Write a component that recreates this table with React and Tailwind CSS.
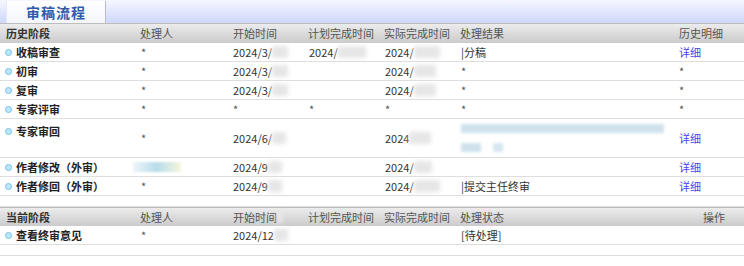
import React from "react";

const F = { fontFamily: '"Noto Sans CJK SC", "Noto Sans", sans-serif' };
const cols = "grid grid-cols-[140px_92px_76px_76px_76px_218px_1fr]";

function Bullet() {
  return (
    <span className="inline-block w-[7px] h-[7px] rounded-full bg-[#bfe6fb] border border-[#6cc4f0] mr-[4px] shrink-0" />
  );
}

function Blur({ w = 18, c = "bg-[#e6e6e6]" }) {
  return <span className={`inline-block h-[12px] ${c} blur-[2px] align-middle`} style={{ width: w }} />;
}

function Date({ text, blur = 18 }) {
  return (
    <span className="flex items-center">
      <span>{text}</span>
      {blur ? <Blur w={blur} /> : null}
    </span>
  );
}

function Row({ name, h = "h-[19px]", cells, top = false }) {
  return (
    <div className={`${cols} ${h} border-b border-[#dedede] text-[11px] text-[#333] items-center`}>
      <div className={`flex items-center pl-[5px] font-bold text-[#222] ${top ? "self-start pt-[4px]" : ""}`}>
        <Bullet />
        {name}
      </div>
      {cells.map((c, i) => (
        <div key={i} className="pl-[1px] flex items-center">{c}</div>
      ))}
    </div>
  );
}

const star = <span className="text-[#555]">*</span>;
const link = <span className="text-[#4a44f0]">详细</span>;

export default function App() {
  return (
    <div className="w-[744px] h-[266px] bg-white overflow-hidden" style={F}>
      {/* tab bar */}
      <div className="h-[23px] bg-gradient-to-b from-[#f6f7fe] to-[#cfd7fb] flex items-end">
        <div className="ml-[6px] w-[100px] h-[22px] bg-gradient-to-b from-white to-[#f4f6fd] border-r border-[#b9bccc] border-l border-l-[#e4e8f8] flex items-center justify-center">
          <span className="text-[14px] font-bold text-[#2d5caa] tracking-[1px]">审稿流程</span>
        </div>
      </div>

      {/* header 1 */}
      <div className={`${cols} h-[20px] bg-gradient-to-b from-[#ececec] to-[#cbcbcb] border-t border-[#bdbdbd] text-[11px] text-[#555] items-center`}>
        <div className="pl-[6px] font-bold text-[#333]">历史阶段</div>
        <div>处理人</div>
        <div className="pl-[1px]">开始时间</div>
        <div>计划完成时间</div>
        <div>实际完成时间</div>
        <div>处理结果</div>
        <div className="pl-[1px]">历史明细</div>
      </div>

      <Row
        name="收稿审查"
        cells={[
          star,
          <Date text="2024/3/" blur={16} />,
          <Date text="2024/" blur={28} />,
          <Date text="2024/" blur={26} />,
          <span>|分稿</span>,
          link,
        ]}
      />
      <Row
        name="初审"
        cells={[star, <Date text="2024/3/" blur={16} />, "", <Date text="2024/" blur={22} />, star, star]}
      />
      <Row
        name="复审"
        cells={[star, <Date text="2024/3/" blur={16} />, "", <Date text="2024/" blur={22} />, star, star]}
      />
      <Row name="专家评审" cells={[star, star, star, star, star, star]} />
      <Row
        name="专家审回"
        h="h-[39px]"
        top
        cells={[
          star,
          <Date text="2024/6/" blur={14} />,
          "",
          <Date text="2024" blur={22} />,
          <div className="flex flex-col gap-[10px] w-full">
            <span className="block h-[9px] w-[203px] bg-[#cfe2ec] blur-[1.5px]" />
            <span className="flex gap-[12px]">
              <span className="block h-[9px] w-[20px] bg-[#cfe2ec] blur-[1.5px]" />
              <span className="block h-[9px] w-[10px] bg-[#d6e7ef] blur-[1.5px]" />
            </span>
          </div>,
          link,
        ]}
      />
      <Row
        name="作者修改（外审）"
        cells={[
          <span className="inline-block h-[10px] w-[48px] bg-gradient-to-r from-[#eef5f9] via-[#b8dceb] to-[#f6f6dc] blur-[1px] -ml-[8px]" />,
          <Date text="2024/9" blur={14} />,
          "",
          <Date text="2024/" blur={18} />,
          "",
          link,
        ]}
      />
      <Row
        name="作者修回（外审）"
        cells={[
          star,
          <Date text="2024/9" blur={14} />,
          "",
          <Date text="2024/" blur={26} />,
          <span>|提交主任终审</span>,
          link,
        ]}
      />
      <div className="h-[11px] border-b border-[#dedede]" />

      {/* header 2 */}
      <div className={`${cols} h-[19px] bg-gradient-to-b from-[#ececec] to-[#cbcbcb] border-t border-[#bdbdbd] text-[11px] text-[#555] items-center`}>
        <div className="pl-[6px] font-bold text-[#333]">当前阶段</div>
        <div>处理人</div>
        <div className="pl-[1px] flex items-center">开始时间<Blur w={6} /></div>
        <div>计划完成时间</div>
        <div>实际完成时间</div>
        <div>处理状态</div>
        <div className="pl-[25px]">操作</div>
      </div>
      <Row
        name="查看终审意见"
        cells={[star, <Date text="2024/12" blur={14} />, "", "", <span>[待处理]</span>, ""]}
      />
      <div className="h-[11px] border-b border-[#dedede]" />
    </div>
  );
}
